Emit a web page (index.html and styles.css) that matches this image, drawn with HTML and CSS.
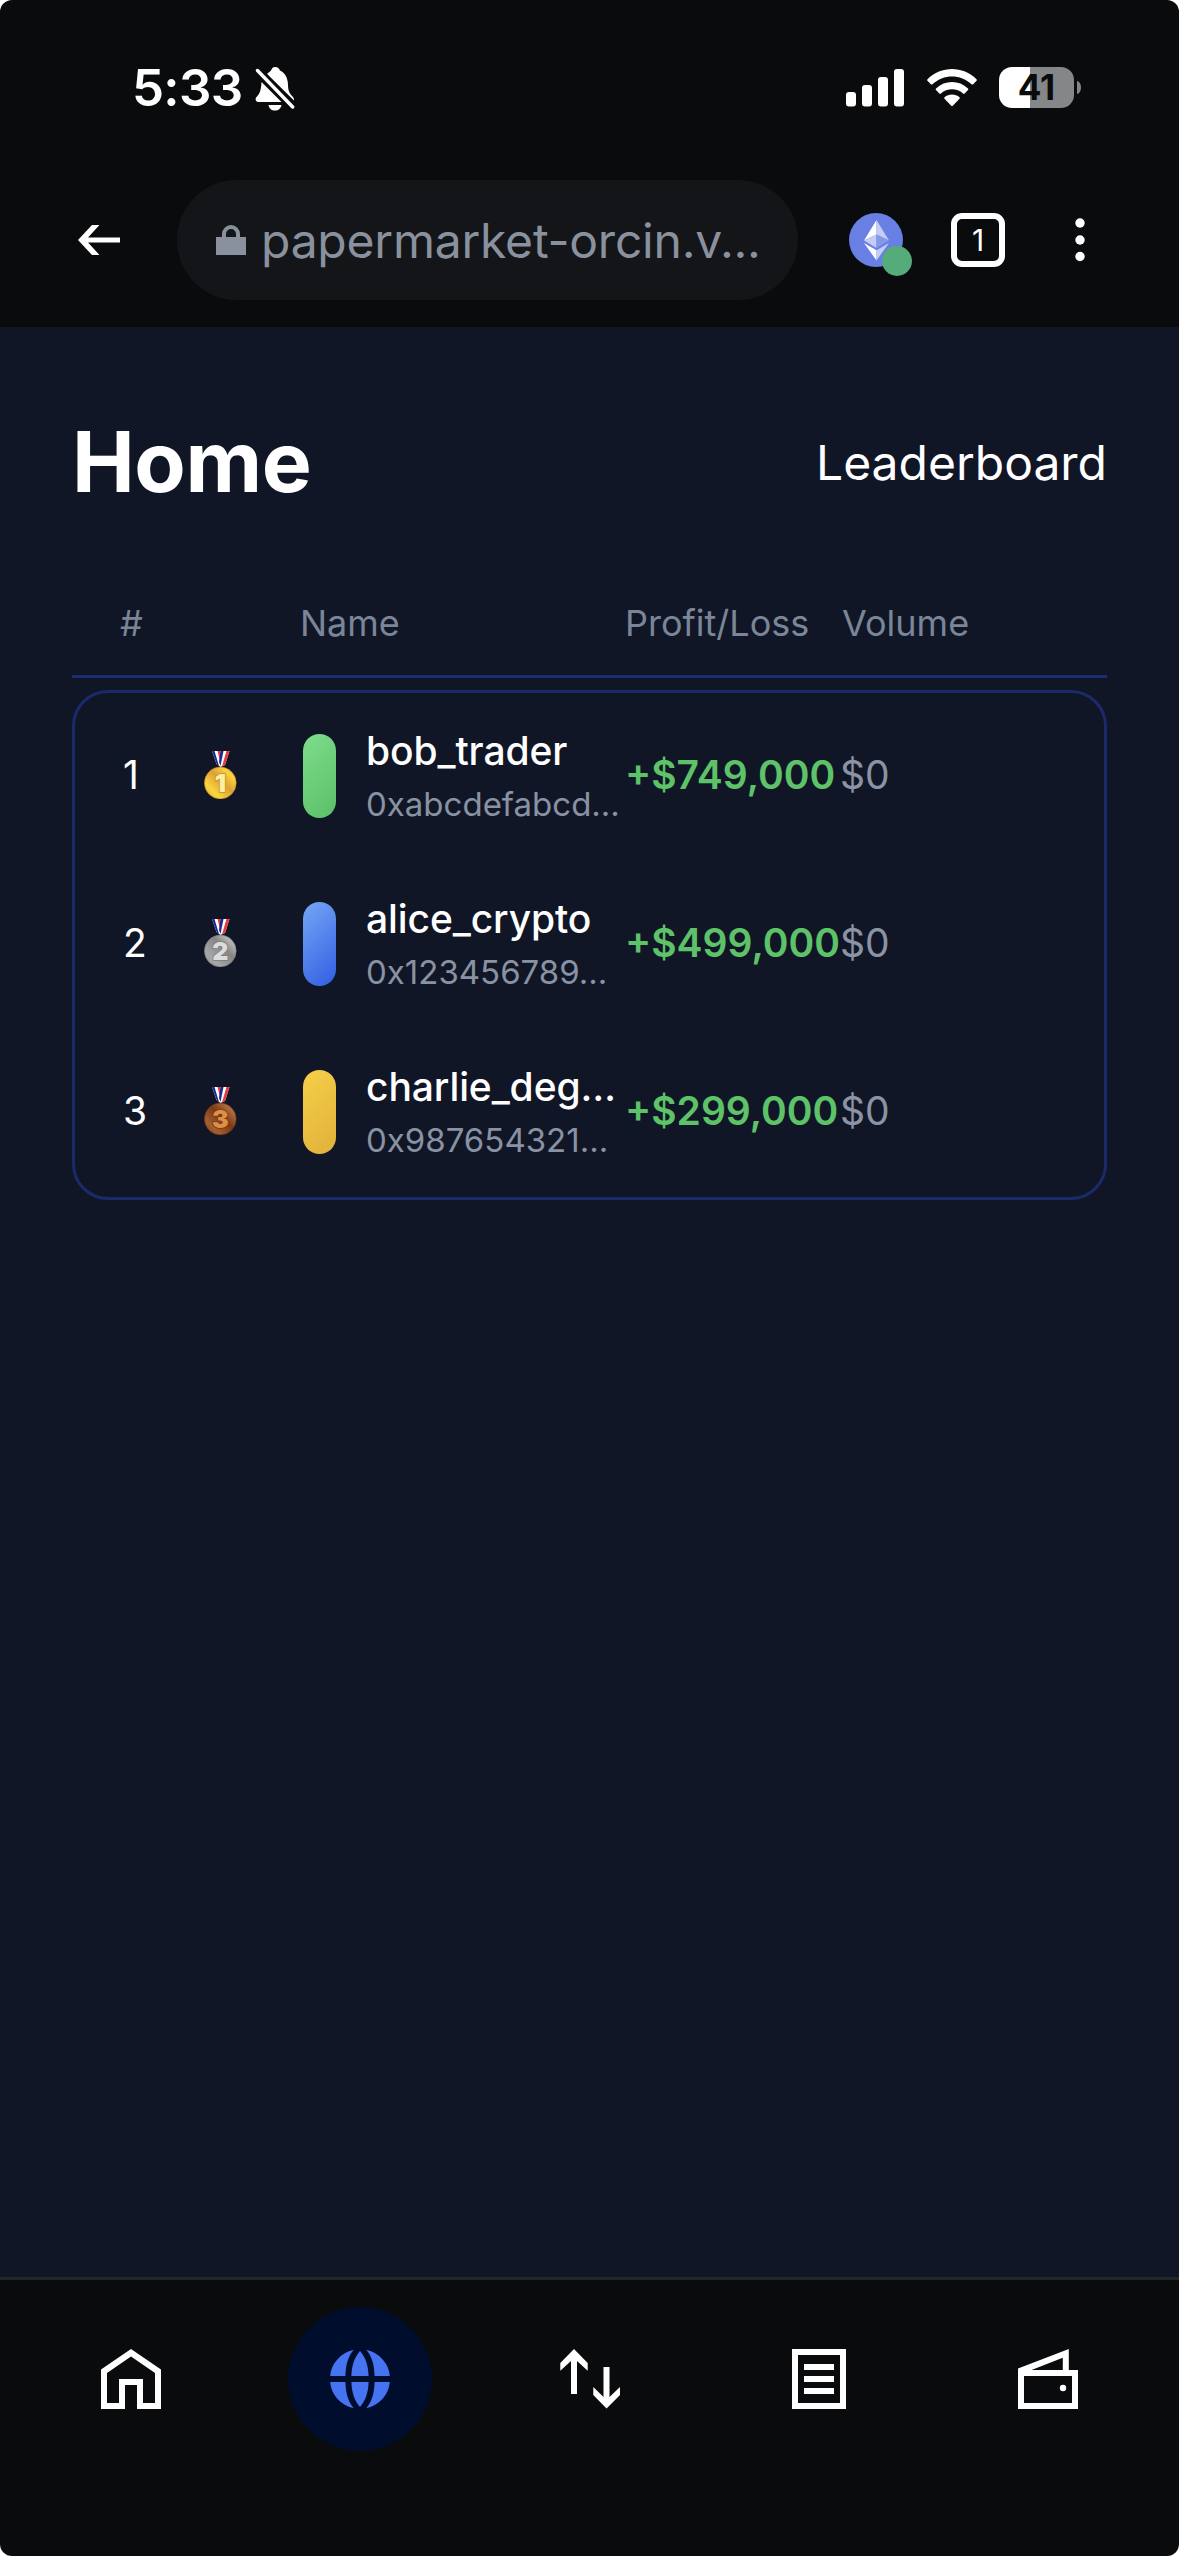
FILE: index.html
```html
<!DOCTYPE html>
<html lang="en">
<head>
<meta charset="utf-8">
<title>Leaderboard</title>
<link rel="stylesheet" href="styles.css">
</head>
<body>
<div class="screen">
  <header class="chrome">
    <div class="status">
      <div class="clock">
        <span class="time">5:33</span>
        <svg class="bell" viewBox="0 0 40 44" width="40" height="44">
          <path fill="#fff" d="M12 7C14 5 15 4.600 16 3.500C17 1 18 0 20 0C22.500 0 24 1 25 3.500C30 6 33 11 33 18C33 24 35 27 38 30C39 31.500 39 32 39 33.500Z"/>
          <path fill="#fff" d="M6.500 15L26.500 35H4C1 35 0 33 1 30.500C4 27.500 6 25 6.500 15ZM13.500 38H26.500C26 41.500 23.500 43.500 20 43.500C16.500 43.500 14 41.500 13.500 38Z"/>
          <path stroke="#0a0b0d" stroke-width="8" d="M3 3.500L38 40"/>
          <path stroke="#fff" stroke-width="3.400" stroke-linecap="round" d="M2.500 3.500L37.700 40"/>
        </svg>
      </div>
      <div class="indicators">
        <svg class="signal" viewBox="0 0 58 38" width="58" height="38" fill="#fff">
          <rect x="0" y="23" width="10" height="14.500" rx="3"/><rect x="16" y="16" width="10" height="21.500" rx="3"/><rect x="32" y="8" width="10" height="29.500" rx="3"/><rect x="48" y="0" width="10" height="37.500" rx="3"/>
        </svg>
        <svg class="wifi" viewBox="0 0 50 38" width="50" height="38" fill="#fff">
          <path d="M.5 10.200C14-3.300 36-3.300 49.500 10.200Q50.300 11 49.500 11.800L46.200 15.200Q45.400 16 44.500 15.200C33.500 4.800 16.500 4.800 5.500 15.200Q4.600 16 3.800 15.200L.5 11.800Q-.3 11 .5 10.200Z"/>
          <path d="M9 19.500C17.800 10.900 32.200 10.900 41 19.500Q41.800 20.300 41 21.100L37.600 24.400Q36.800 25.100 36 24.400C30 19 20 19 14 24.400Q13.200 25.100 12.400 24.400L9 21.100Q8.200 20.300 9 19.500Z"/>
          <path d="M17.500 28.300C21.600 24.600 28.400 24.600 32.500 28.300Q33.200 29 32.500 29.800L25.800 36.800Q25 37.500 24.200 36.800L17.500 29.800Q16.800 29 17.500 28.300Z"/>
        </svg>
        <div class="battery"><span class="cell">41</span><span class="nub"></span></div>
      </div>
    </div>
    <div class="toolbar">
      <svg class="back" viewBox="0 0 42 30" width="42" height="30"><path fill="#fff" d="M0 15L14 0H21.500L10 12.500H42V17.500H10L21.500 30H14Z"/></svg>
      <div class="address">
        <svg class="lock" viewBox="0 0 30 30" width="30" height="30"><path fill="#8a919e" d="M0 12H6V9A9 9 0 0 1 24 9V12H30V30H0ZM10 12H20V9A5 5 0 0 0 10 9Z"/></svg>
        <span class="url">papermarket-orcin.v...</span>
      </div>
      <svg class="chain" viewBox="0 0 63 63" width="63" height="63">
        <circle cx="27" cy="27" r="27" fill="#687fe3"/>
        <path fill="#fff" d="M27.500 7L15 27.500L27.500 21.500Z"/><path fill="#c3cdf5" d="M27.500 7L40 27.500L27.500 21.500Z"/>
        <path fill="#c3cdf5" d="M15 27.500L27.500 21.500V35Z"/><path fill="#8698e8" d="M40 27.500L27.500 21.500V35Z"/>
        <path fill="#fff" d="M15 30L27.500 37.300V47.500Z"/><path fill="#c3cdf5" d="M40 30L27.500 37.300V47.500Z"/>
        <circle cx="48" cy="48" r="15" fill="#56ab7a"/>
      </svg>
      <div class="tabs">1</div>
      <svg class="more" viewBox="0 0 10 44" width="10" height="44" fill="#fff"><circle cx="5" cy="5" r="4.700"/><circle cx="5" cy="22" r="4.700"/><circle cx="5" cy="38.500" r="4.700"/></svg>
    </div>
  </header>

  <main class="page">
    <div class="heading">
      <h1 class="title">Home</h1>
      <a class="link">Leaderboard</a>
    </div>
    <div class="columns">
      <span>#</span><span>Name</span><span>Profit/Loss</span><span>Volume</span>
    </div>
    <div class="card">
      <div class="row">
        <span class="rank">1</span>
        <svg class="medal" viewBox="0 0 33 48" width="33" height="48">
          <defs>
            <linearGradient id="gold" x1="0" y1="1" x2="1" y2="0"><stop offset="0" stop-color="#d99b22"/><stop offset=".25" stop-color="#f8d83f"/><stop offset=".55" stop-color="#dfa032"/><stop offset=".8" stop-color="#f9d640"/><stop offset="1" stop-color="#c98a1e"/></linearGradient>
            <linearGradient id="silver" x1="0" y1="1" x2="1" y2="0"><stop offset="0" stop-color="#8b8b8b"/><stop offset=".25" stop-color="#a8a8a8"/><stop offset=".6" stop-color="#858585"/><stop offset=".85" stop-color="#bdbdbd"/><stop offset="1" stop-color="#8d8d8d"/></linearGradient>
            <linearGradient id="bronze" x1="0" y1="1" x2="1" y2="0"><stop offset="0" stop-color="#7a3b18"/><stop offset=".25" stop-color="#a3602f"/><stop offset=".55" stop-color="#7e3815"/><stop offset=".82" stop-color="#ae7040"/><stop offset="1" stop-color="#75330f"/></linearGradient>
            <g id="ribbon">
              <path fill="#fff" d="M8 0H25.500L21 14L16.500 16L12.500 13Z"/>
              <path fill="#1c2a90" d="M8 0H10.500L15 15L12.800 13.500Z"/><path fill="#e33b38" d="M13.500 0H16.500L17.500 6L16 10Z"/>
              <path fill="#1c2a90" d="M16.500 0H19.500L16.500 15L15 11Z"/><path fill="#e33b38" d="M22.500 0H25.500L21 14L18 15.500Z"/>
            </g>
          </defs>
          <use href="#ribbon"/><circle cx="16.300" cy="32" r="15.900" fill="url(#gold)" stroke="#bd8420" stroke-width=".6"/>
          <text class="digit" x="16.300" y="41.300" fill="#fdeea2" stroke="#c88f25">1</text>
        </svg>
        <span class="avatar green"></span>
        <div class="who"><div class="name">bob_trader</div><div class="addr">0xabcdefabcd…</div></div>
        <span class="profit">+$749,000</span>
        <span class="volume">$0</span>
      </div>
      <div class="row">
        <span class="rank">2</span>
        <svg class="medal" viewBox="0 0 33 48" width="33" height="48">
          <use href="#ribbon"/><circle cx="16.300" cy="32" r="15.900" fill="url(#silver)" stroke="#777" stroke-width=".6"/>
          <text class="digit" x="16.300" y="41.300" fill="#dcdcdc" stroke="#7d7d7d">2</text>
        </svg>
        <span class="avatar blue"></span>
        <div class="who"><div class="name">alice_crypto</div><div class="addr">0x123456789…</div></div>
        <span class="profit">+$499,000</span>
        <span class="volume">$0</span>
      </div>
      <div class="row">
        <span class="rank">3</span>
        <svg class="medal" viewBox="0 0 33 48" width="33" height="48">
          <use href="#ribbon"/><circle cx="16.300" cy="32" r="15.900" fill="url(#bronze)" stroke="#6b3010" stroke-width=".6"/>
          <text class="digit" x="16.300" y="41.300" fill="#dc9147" stroke="#7a3612">3</text>
        </svg>
        <span class="avatar yellow"></span>
        <div class="who"><div class="name">charlie_deg…</div><div class="addr">0x987654321…</div></div>
        <span class="profit">+$299,000</span>
        <span class="volume">$0</span>
      </div>
    </div>
  </main>

  <nav class="tabbar">
    <a class="tab"><svg viewBox="0 0 60 60" width="60" height="60"><path fill="#fff" fill-rule="evenodd" d="M30 0L60 20.500V60H36V36H24V60H0V20.500ZM30 7.500L6 24V54H18V30H42V54H54V24Z"/></svg></a>
    <a class="tab active"><svg viewBox="0 0 60 60" width="60" height="60" fill="#4673f0"><path id="half" d="M23.700.7C10 4 1 15 .2 27H15.400C15.700 15 18.500 7 23.700.7ZM30 2C24.500 8.500 21.800 16 21.400 27H38.600C38.200 16 35.500 8.500 30 2ZM36.300.7C50 4 59 15 59.800 27H44.600C44.300 15 41.500 7 36.300.7Z"/><use href="#half" transform="matrix(1 0 0 -1 0 60)"/></svg></a>
    <a class="tab"><svg viewBox="0 0 60 60" width="60" height="60" fill="#fff"><path d="M14 0L27.700 14V21.700L17 12V45H11V12L.3 21.700V14Z"/><path d="M43.500 18H49.500V48L60 38V46L46.500 59.500L33.300 46V38L43.500 48Z"/></svg></a>
    <a class="tab"><svg viewBox="0 0 60 60" width="60" height="60"><path fill="#fff" fill-rule="evenodd" d="M3 0H57V60H3ZM9 6V54H51V6ZM15 15H45V21H15ZM15 27H45V33H15ZM15 39H45V45H15Z"/></svg></a>
    <a class="tab"><svg viewBox="0 0 60 60" width="60" height="60"><path fill="#fff" fill-rule="evenodd" d="M0 19.500L50.800 0V21H60V60H0ZM13.500 21H44.800V8.700ZM6 27V54H54V27Z"/><circle cx="45" cy="39" r="3.200" fill="#fff"/></svg></a>
  </nav>
</div>
</body>
</html>
```

FILE: styles.css
```css
* { box-sizing: border-box; }
body { margin: 0; background: #fff; font-family: Inter, "Liberation Sans", sans-serif; color: #fff; }
svg { display: block; flex: none; }
.screen { width: 1179px; height: 2556px; display: flex; flex-direction: column; background: #0a0b0d; border-radius: 12px; overflow: hidden; }

/* phone status bar and browser toolbar */
.chrome { height: 327px; }
.status { height: 180px; padding: 67px 98px 0 132px; display: flex; justify-content: space-between; align-items: flex-start; }
.clock { display: flex; gap: 12px; }
.time { width: 111px; font-size: 51px; font-weight: 600; line-height: 42px; white-space: nowrap; letter-spacing: -.7px; }
.indicators { display: flex; align-items: flex-start; }
.signal { margin-top: 2px; }
.wifi { margin: 2px 22px 0 23px; }
.battery { display: flex; align-items: center; gap: 3px; }
.cell { width: 75px; height: 41px; border-radius: 13px; background: linear-gradient(90deg, #fff 31px, #858687 31px); color: #0a0b0d; font-size: 35px; font-weight: 700; line-height: 41px; text-align: center; }
.nub { width: 4px; height: 13px; border-radius: 0 4px 4px 0 / 0 6.500px 6.500px 0; background: #858687; }
.toolbar { height: 120px; display: flex; align-items: center; padding: 0 94px 0 78px; }
.address { width: 621px; height: 120px; margin-left: 57px; padding-left: 39px; border-radius: 60px; background: #141519; display: flex; align-items: center; gap: 15px; }
.url { padding-top: 2px; font-size: 48px; line-height: 60px; letter-spacing: -.22px; color: #8a919e; white-space: nowrap; }
.chain { margin: 9px 0 0 51px; }
.tabs { width: 54px; height: 54px; margin-left: 39px; border: 6px solid #fff; border-radius: 11px; font-size: 30px; line-height: 42px; text-align: center; }
.more { margin-left: 70px; }

/* page content */
.page { flex: 1; padding: 84px 72px 0; background: #111627; }
.heading { height: 102px; display: flex; justify-content: space-between; align-items: center; }
.title { margin: 0; font-size: 84px; font-weight: 700; line-height: 102px; letter-spacing: -.4px; }
.link { padding-top: 2px; font-size: 48px; line-height: 60px; }
.columns { height: 165px; padding: 83px 0 0 48px; display: grid; grid-template-columns: 180px 325px 217px 1fr; border-bottom: 3px solid #1d2d70; font-size: 36px; line-height: 54px; color: #7a8697; }
.card { margin-top: 12px; border: 3px solid #1b2a69; border-radius: 36px; }
.row { height: 168px; padding: 0 0 2px 48px; display: grid; grid-template-columns: 81px 99px 63px 259px 215px 1fr; align-items: center; font-size: 39px; white-space: nowrap; }
.rank, .profit, .volume { padding-bottom: 4px; }
.medal { margin-bottom: 2px; }
.digit { font-size: 25px; font-weight: 900; text-anchor: middle; paint-order: stroke; stroke-width: 1.500px; }
.avatar { width: 33px; height: 84px; border-radius: 17px; }
.green { background: linear-gradient(135deg, #7edd8b, #5bbf68); }
.blue { background: linear-gradient(135deg, #74a7f5, #325ee2); }
.yellow { background: linear-gradient(135deg, #f6d049, #e1b03b); }
.name { font-weight: 500; line-height: 54px; letter-spacing: -.1px; }
.addr { padding-top: 2px; font-size: 33px; line-height: 48px; color: #8892a2; }
.profit { font-weight: 600; color: #5dc268; }
.volume { color: #8b94a5; }

/* bottom navigation */
.tabbar { height: 279px; padding: 27px 59px 0; border-top: 3px solid #222626; display: flex; justify-content: space-between; }
.tab { width: 144px; height: 144px; border-radius: 72px; display: flex; align-items: center; justify-content: center; }
.active { background: #000d2d; }
```
